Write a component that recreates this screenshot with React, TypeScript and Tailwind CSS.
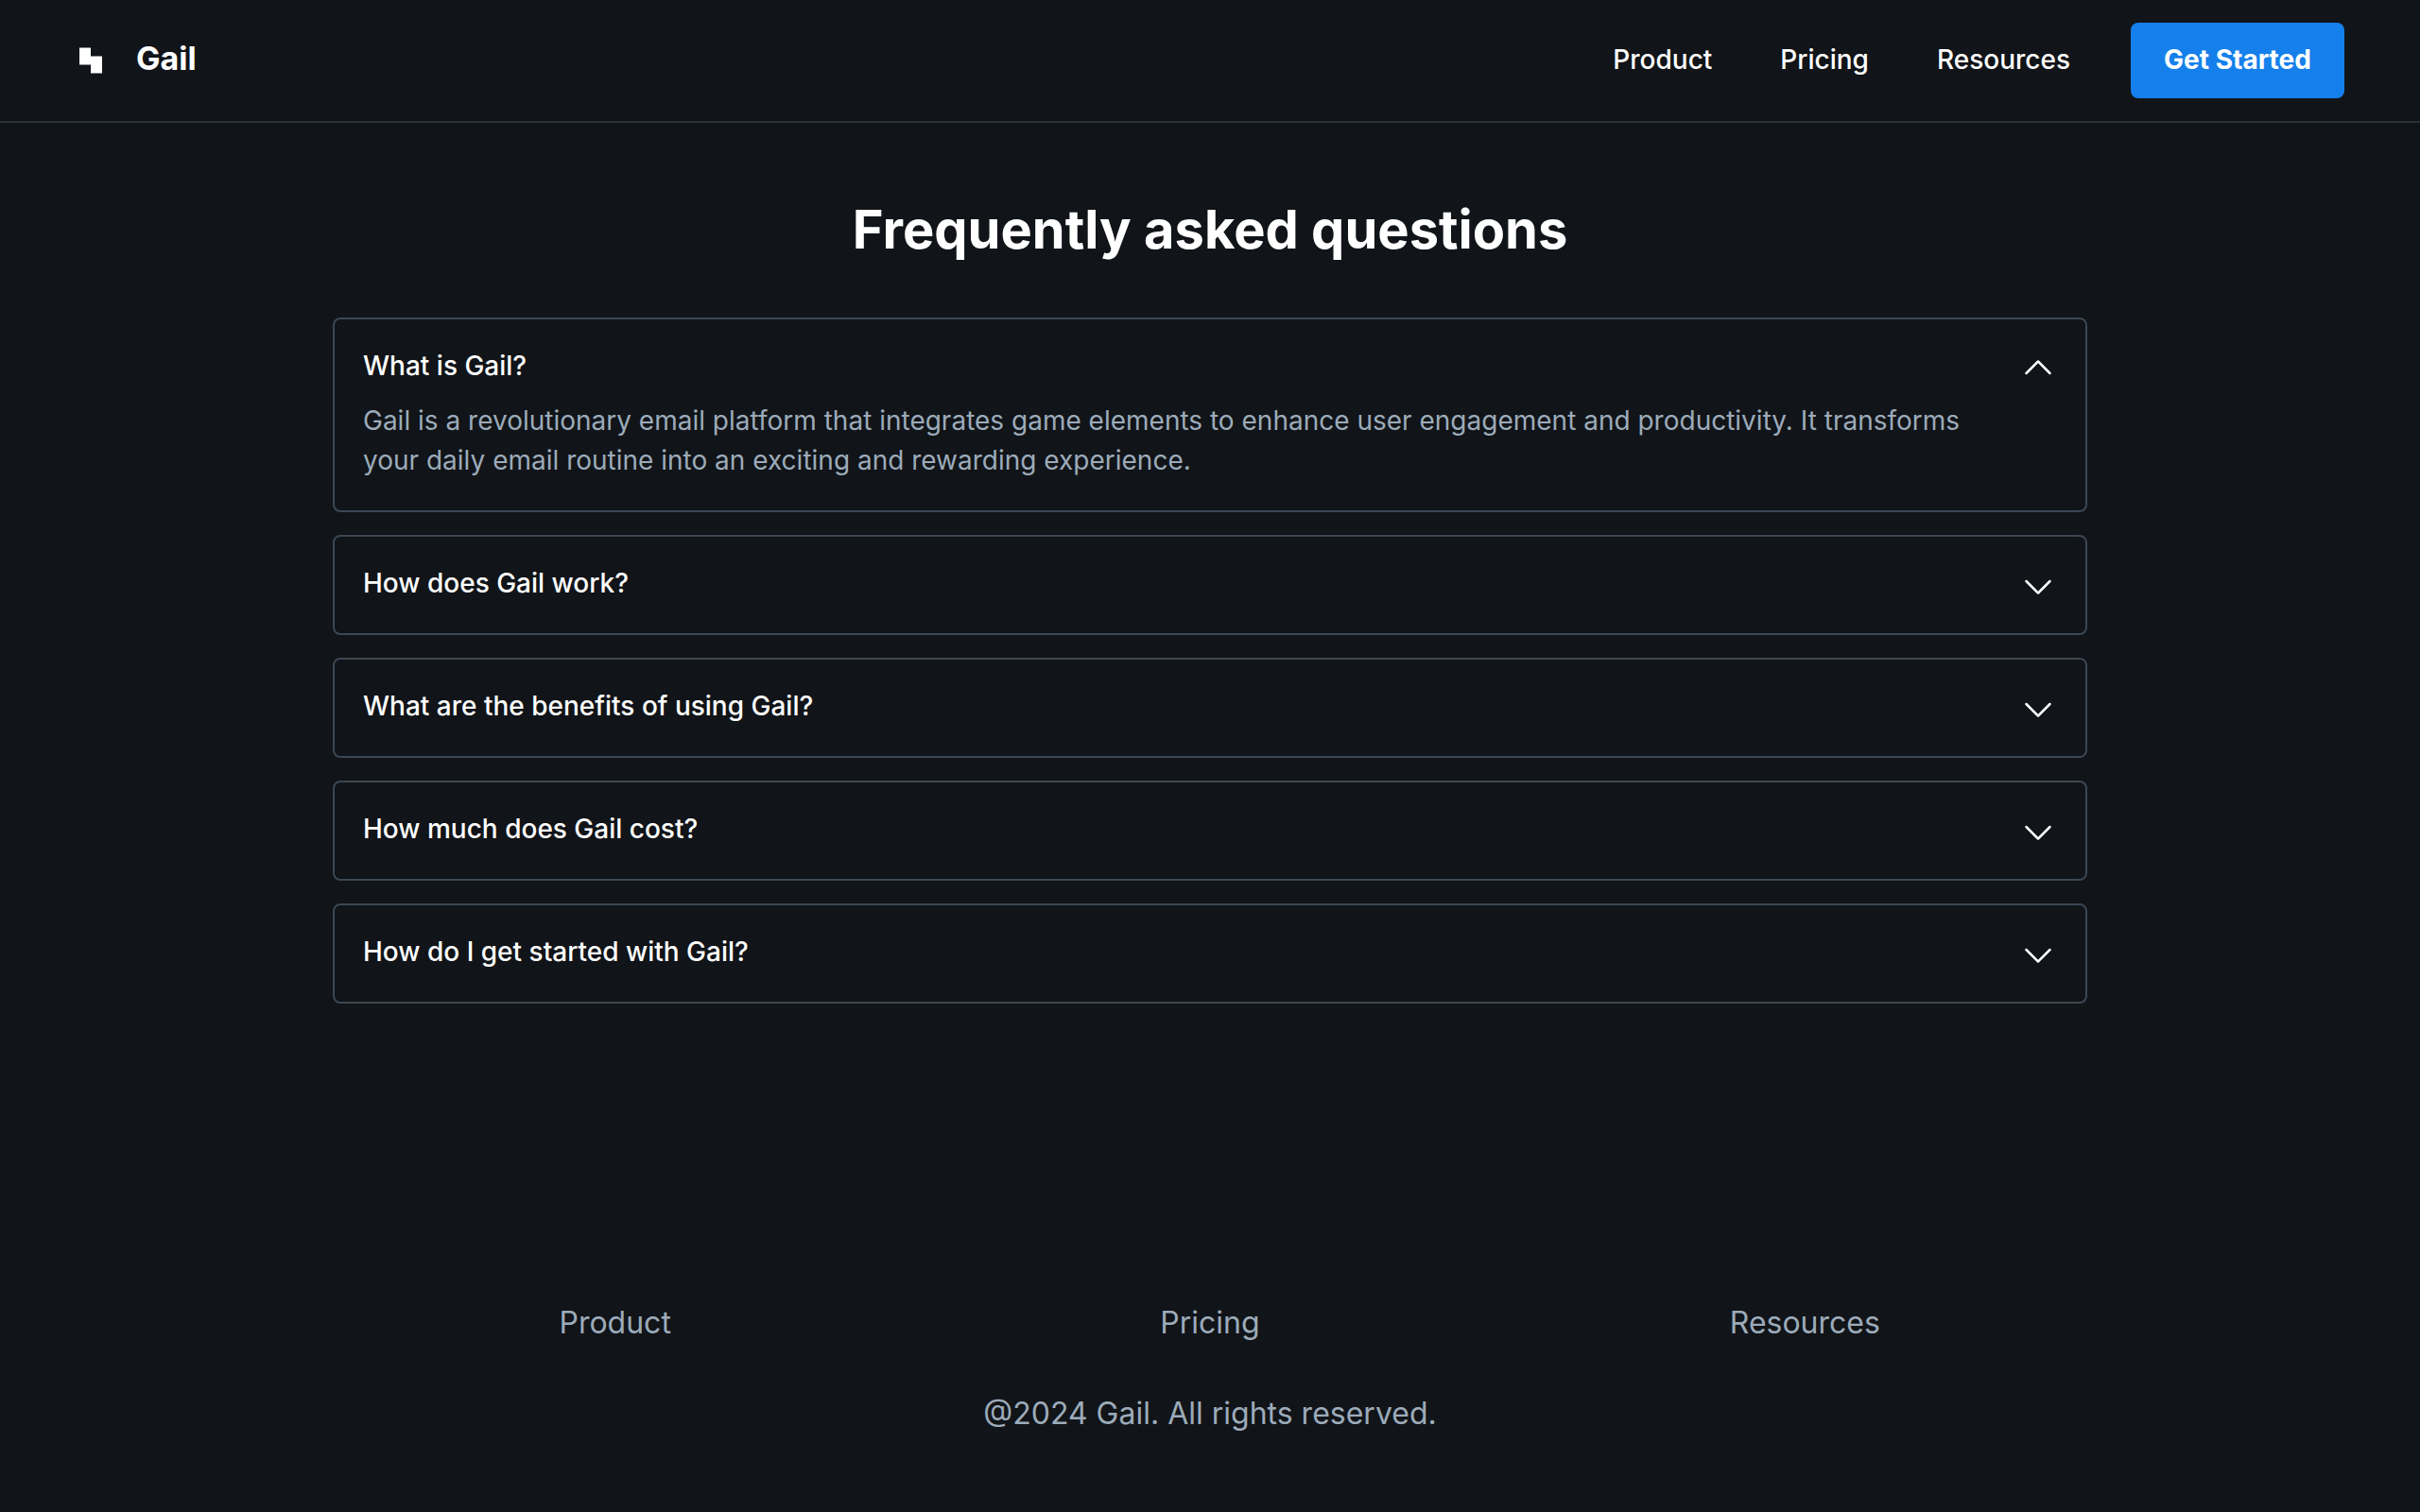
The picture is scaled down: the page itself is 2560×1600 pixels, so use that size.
import { useState } from "react";

type Faq = { question: string; answer?: string };

const links = ["Product", "Pricing", "Resources"];

const faqs: Faq[] = [
  {
    question: "What is Gail?",
    answer:
      "Gail is a revolutionary email platform that integrates game elements to enhance user engagement and productivity. It transforms your daily email routine into an exciting and rewarding experience.",
  },
  { question: "How does Gail work?" },
  { question: "What are the benefits of using Gail?" },
  { question: "How much does Gail cost?" },
  { question: "How do I get started with Gail?" },
];

function Logo() {
  return (
    <svg className="size-8" viewBox="0 0 32 32" fill="currentColor" aria-hidden="true">
      <path d="M4 2.4H16V11.4H28V29.6H16V20.6H4Z" />
    </svg>
  );
}

function Caret({ open }: { open: boolean }) {
  return (
    <svg
      className={open ? "size-10 shrink-0 rotate-180" : "size-10 shrink-0"}
      viewBox="0 0 256 256"
      fill="currentColor"
      aria-hidden="true"
    >
      <path d="M213.66,101.66l-80,80a8,8,0,0,1-11.32,0l-80-80A8,8,0,0,1,53.66,90.34L128,164.69l74.34-74.35a8,8,0,0,1,11.32,11.32Z" />
    </svg>
  );
}

function Header() {
  return (
    <header className="flex items-center justify-between border-b-2 border-[#283039] px-20 py-6">
      <div className="flex items-center gap-8">
        <Logo />
        <span className="pb-1 text-[34px] leading-[42px] font-bold">Gail</span>
      </div>
      <div className="flex items-center gap-16">
        <nav className="flex items-center gap-18 pb-0.5">
          {links.map((link) => (
            <a key={link} href="#" className="text-[28px] leading-[42px] font-medium">
              {link}
            </a>
          ))}
        </nav>
        <button type="button" className="h-20 min-w-[226px] rounded-lg bg-[#1580eb] px-8 pb-0.5 text-[28px] leading-[42px] font-bold">
          Get Started
        </button>
      </div>
    </header>
  );
}

function FaqItem({ faq, id, open, onToggle }: { faq: Faq; id: string; open: boolean; onToggle: () => void }) {
  return (
    <div className="rounded-lg border-2 border-[#3b4754] px-[30px] pt-3 pb-4">
      <h3>
        <button
          type="button"
          aria-expanded={open}
          aria-controls={id}
          onClick={onToggle}
          className="flex w-full items-center justify-between gap-12 py-4 text-left text-[28px] leading-[42px] font-medium"
        >
          {faq.question}
          <span className="-mb-1.5 shrink-0">
            <Caret open={open} />
          </span>
        </button>
      </h3>
      {open && faq.answer && (
        <p id={id} className="pr-12 pb-4 text-[28px] leading-[42px] text-[#9cabba]">
          {faq.answer}
        </p>
      )}
    </div>
  );
}

function Footer() {
  return (
    <footer className="mx-auto flex w-full max-w-[1920px] flex-col gap-12 px-4 py-20 text-center text-[32px] leading-[48px] text-[#9cabba]">
      <nav className="grid grid-cols-3">
        {links.map((link) => (
          <a key={link} href="#">
            {link}
          </a>
        ))}
      </nav>
      <p>@2024 Gail. All rights reserved.</p>
    </footer>
  );
}

export default function App() {
  const [openIndex, setOpenIndex] = useState(0);

  return (
    <div className="flex min-h-screen flex-col bg-[#111418] font-['Inter',sans-serif] text-white">
      <Header />
      <main className="mx-auto w-full max-w-[1920px] grow px-8 pt-[78px] pb-20">
        <h2 className="pb-[58px] text-center text-[56px] leading-[70px] font-bold">Frequently asked questions</h2>
        <div className="flex flex-col gap-6">
          {faqs.map((faq, index) => (
            <FaqItem
              key={faq.question}
              faq={faq}
              id={`answer-${index}`}
              open={openIndex === index}
              onToggle={() => setOpenIndex(openIndex === index ? -1 : index)}
            />
          ))}
        </div>
      </main>
      <Footer />
    </div>
  );
}
